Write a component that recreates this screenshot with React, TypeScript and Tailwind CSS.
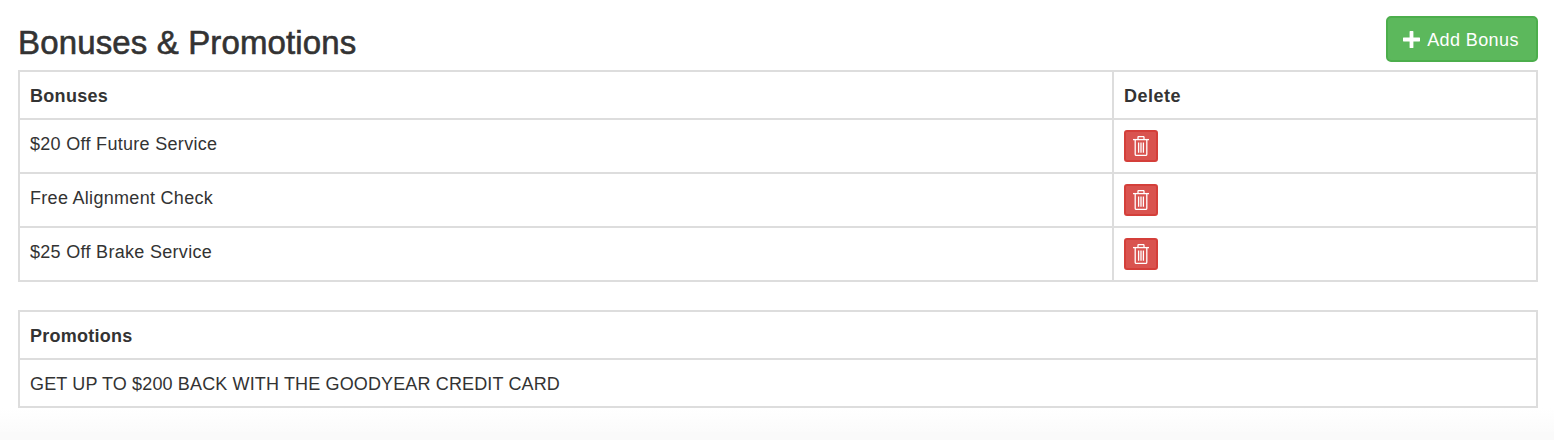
const bonuses = ["$20 Off Future Service", "Free Alignment Check", "$25 Off Brake Service"];

function PlusIcon() {
  return (
    <svg viewBox="0 0 17 17" className="h-[17px] w-[17px]" fill="currentColor">
      <path d="M6.6 0.5a.6.6 0 0 1 .6-.5h2.6a.6.6 0 0 1 .6.5V6.4h5.9a.6.6 0 0 1 .7.6v2.8a.6.6 0 0 1-.7.6H10.4v6a.6.6 0 0 1-.6.6H7.2a.6.6 0 0 1-.6-.6v-6H.7a.6.6 0 0 1-.7-.6V7a.6.6 0 0 1 .7-.6h5.9z" />
    </svg>
  );
}

function TrashIcon() {
  return (
    <svg viewBox="0 0 16 20" className="h-[20px] w-[16px]" fill="none" stroke="currentColor" strokeWidth="1.3">
      <path d="M0 3.6h16" />
      <path d="M5 3.4V1.2q0-.6.6-.6h4.8q.6 0 .6.6v2.2" />
      <path d="M2.2 3.6v14.6q0 1.2 1.2 1.2h9.2q1.2 0 1.2-1.2V3.6" />
      <path d="M5.6 6.4v10.4M8 6.4v10.4M10.4 6.4v10.4" />
    </svg>
  );
}

export default function App() {
  return (
    <div className="h-[440px] overflow-hidden bg-white font-['Liberation_Sans',Arial,sans-serif] text-[18px] leading-[24px] tracking-[0.14px] text-[#333]">
      <div className="pt-4 pr-[16px] pl-[18px]">
        <div className="flex items-end justify-between">
          <h2 className="mb-[9px] text-[33px] leading-[36px] font-normal [-webkit-text-stroke:0.6px_#333]">Bonuses &amp; Promotions</h2>
          <button className="mb-2 flex h-[46px] w-[152px] items-center justify-center gap-[7px] rounded-[5px] border-2 border-[#4cae4c] bg-[#5cb85c] pt-[1px] pr-[2px] text-[18px] tracking-[0.4px] text-white">
            <PlusIcon />
            Add Bonus
          </button>
        </div>

        <table className="w-full table-fixed border-collapse border-2 border-[#ddd]">
          <thead>
            <tr className="h-[48px]">
              <th className="border-2 border-[#ddd] px-[10px] pt-[2px] text-left align-middle font-bold tracking-[0.3px]">Bonuses</th>
              <th className="w-[424px] border-2 border-[#ddd] px-[10px] pt-[2px] text-left align-middle font-bold tracking-[0.5px]">Delete</th>
            </tr>
          </thead>
          <tbody>
            {bonuses.map((bonus) => (
              <tr key={bonus} className="h-[54px]">
                <td className="border-2 border-[#ddd] px-[10px] pt-[12px] align-top tracking-[0.3px]">{bonus}</td>
                <td className="border-2 border-[#ddd] px-[10px] py-[10px] align-top">
                  <button className="flex h-[32px] w-[34px] items-center justify-center rounded-[3px] border-2 border-[#d43f3a] bg-[#d9534f] text-white">
                    <TrashIcon />
                  </button>
                </td>
              </tr>
            ))}
          </tbody>
        </table>

        <table className="mt-[28px] w-full border-collapse border-2 border-[#ddd]">
          <thead>
            <tr className="h-[48px]">
              <th className="border-2 border-[#ddd] px-[10px] pt-[2px] text-left align-middle font-bold tracking-[0.25px]">Promotions</th>
            </tr>
          </thead>
          <tbody>
            <tr className="h-[48px]">
              <td className="border-2 border-[#ddd] px-[10px] pt-[2px] align-middle">GET UP TO $200 BACK WITH THE GOODYEAR CREDIT CARD</td>
            </tr>
          </tbody>
        </table>
      </div>
      <div className="h-[24px] bg-gradient-to-b from-white to-[#fbfbfb]" />
      <div className="h-[8px] bg-[#fafafa]" />
    </div>
  );
}
